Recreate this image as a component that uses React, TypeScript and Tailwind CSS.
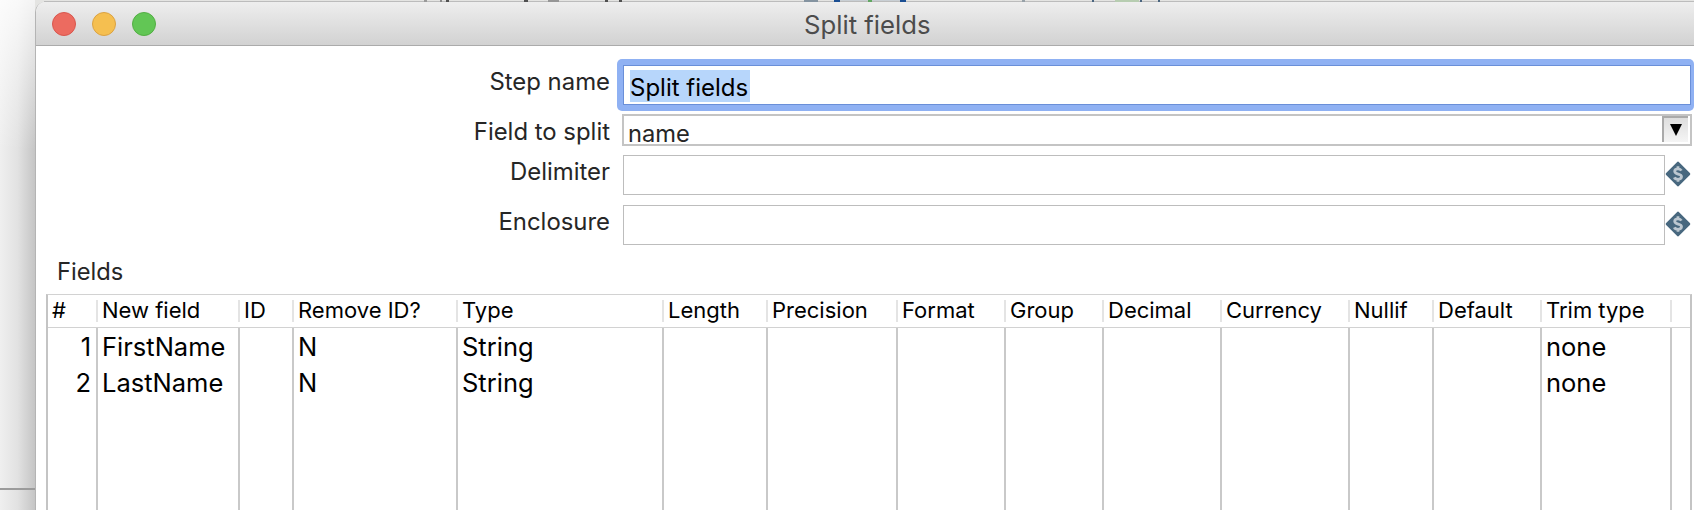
import { ReactNode } from "react";

const columns = [
  { title: "#", box: "w-[50px]" },
  { title: "New field", box: "w-[142px]" },
  { title: "ID", box: "w-[54px]" },
  { title: "Remove ID?", box: "w-[164px]" },
  { title: "Type", box: "w-[206px]" },
  { title: "Length", box: "w-[104px]" },
  { title: "Precision", box: "w-[130px]" },
  { title: "Format", box: "w-[108px]" },
  { title: "Group", box: "w-[98px]" },
  { title: "Decimal", box: "w-[118px]" },
  { title: "Currency", box: "w-[128px]" },
  { title: "Nullif", box: "w-[84px]" },
  { title: "Default", box: "w-[108px]" },
  { title: "Trim type", box: "w-[130px]" },
];

const rows: Record<string, string>[] = [
  { "#": "1", "New field": "FirstName", "Remove ID?": "N", Type: "String", "Trim type": "none" },
  { "#": "2", "New field": "LastName", "Remove ID?": "N", Type: "String", "Trim type": "none" },
];

function Label({ children }: { children: ReactNode }) {
  return (
    <div className="w-[574px] shrink-0 text-right text-[23.9px] leading-[30px] whitespace-nowrap text-[#262626]">
      {children}
    </div>
  );
}

function VariableIcon() {
  return (
    <svg width="26" height="26" viewBox="0 0 26 26" className="mt-[6px] block shrink-0">
      <path d="M13 2.200 23.800 13 13 23.800 2.200 13Z" fill="#48687f" stroke="#48687f" strokeWidth="3" strokeLinejoin="round" />
      <path d="M16.4 9.6C15.700 8.300 14.600 7.800 13 7.800c-2 0-3.300.9-3.300 2.500 0 3.600 6.800 1.900 6.800 5.300 0 1.700-1.500 2.700-3.500 2.700-1.700 0-3.100-.6-3.700-1.900M13 5.300v2.500M13 18.300v2.400" fill="none" stroke="#bcc7d0" strokeWidth="2.800" />
    </svg>
  );
}

/* Sliver of the canvas that shows above the dialog's title bar. */
function CanvasSliver() {
  return (
    <svg width="1659" height="2" viewBox="35 0 1659 2" className="block shrink-0">
      <rect x="35" width="1659" height="2" fill="#e4e4e2" />
      <rect x="44" y="1" width="1650" height="1" fill="#bcbcbc" />
      <g fill="#505050">
        <rect x="424" width="3" height="2" fill="#999" />
        <rect x="440" width="2" height="2" fill="#888" />
        <rect x="446" width="3" height="2" />
        <rect x="524" width="4" height="2" />
        <rect x="548" width="11" height="2" fill="#969696" />
        <rect x="605" width="3" height="2" />
        <rect x="619" width="3" height="2" />
      </g>
      <rect x="804" width="14" height="2" fill="#8493a0" />
      <rect x="840" width="60" height="1" fill="#c9cfd4" />
      <rect x="834" width="6" height="2" fill="#1b4f93" />
      <rect x="868" width="4" height="2" fill="#62a862" />
      <rect x="900" width="6" height="2" fill="#1b4f93" />
      <rect x="1022" width="3" height="2" fill="#97a1a8" />
      <rect x="1092" width="2" height="2" fill="#4a6580" />
      <rect x="1115" width="24" height="2" fill="#b7cdb1" />
      <rect x="1140" width="2" height="2" fill="#4a6580" />
      <rect x="1158" width="2" height="2" fill="#4a6580" />
    </svg>
  );
}

export default function App() {
  return (
    <div className="flex h-[510px] w-[1694px] overflow-hidden bg-white font-[Inter,sans-serif] text-black">
      <div className="flex w-[35px] shrink-0 flex-col bg-linear-to-r from-[#efefef] via-[#e2e2e2] to-[#c5c5c5]">
        <div className="h-[150px] bg-linear-to-b from-white/80 to-white/0" />
        <div className="mt-[338px] h-[2px] bg-[#9b9b9b]" />
      </div>
      <div className="flex w-[1659px] shrink-0 flex-col bg-[#e4e4e2]">
        <CanvasSliver />
        <div className="flex h-[508px] flex-col overflow-hidden rounded-tl-[10px] border-l border-[#b4b4b4] bg-white">
          <div className="flex h-[44px] items-center border-b border-[#ababab] bg-linear-to-b from-[#eeeeee] to-[#d2d2d2] pt-[2px]">
            <div className="ml-4 flex w-[752px] gap-4">
              <span className="size-6 rounded-full border border-[#d8574e] bg-[#ec6b60]" />
              <span className="size-6 rounded-full border border-[#daa243] bg-[#f5bf50]" />
              <span className="size-6 rounded-full border border-[#53ae44] bg-[#62c655]" />
            </div>
            <span className="pt-[2px] text-[25.7px] leading-[30px] text-[#4c4c4c]">Split fields</span>
          </div>

          <div className="flex h-[68px] pt-[13px]">
            <div className="pt-[8px]"><Label>Step name</Label></div>
            <div className="ml-[7px] h-[52px] w-[1077px] shrink-0 rounded-[5px] bg-[#8fb1f3] py-[6px] pr-[3px] pl-[6px]">
              <div className="flex h-[40px] border border-[#6a8fd8] bg-white pt-[4px] pl-[6px]">
                <span className="h-8 w-[120px] bg-[#b7d6fb] text-[24px] leading-[35px] whitespace-nowrap">Split fields</span>
              </div>
            </div>
          </div>

          <div className="flex h-[41px]">
            <div className="pt-[3px]"><Label>Field to split</Label></div>
            <div className="ml-3 flex h-8 w-[1070px] shrink-0 border-2 border-[#c4c4c4] bg-white">
              <span className="h-7 w-[1038px] pl-1 text-[23.7px] leading-[35px] text-[#262626]">name</span>
              <span className="flex h-[26px] w-[26px] items-center justify-center border-t-2 border-l-2 border-[#aaa] bg-linear-to-b from-[#dedede] to-[#f5f5f5]">
                <svg width="12" height="12" viewBox="0 0 12 12"><path d="M0 0H12L6 12Z" fill="#000" /></svg>
              </span>
            </div>
          </div>

          <div className="flex h-[50px]">
            <div className="pt-[2px]"><Label>Delimiter</Label></div>
            <div className="ml-[13px] h-10 w-[1042px] shrink-0 border border-[#bdbdbd] bg-white" />
            <VariableIcon />
          </div>

          <div className="flex h-[48px]">
            <div className="pt-[2px]"><Label>Enclosure</Label></div>
            <div className="ml-[13px] h-10 w-[1042px] shrink-0 border border-[#bdbdbd] bg-white" />
            <VariableIcon />
          </div>

          <div className="h-[42px] pt-[4px] pl-[21px] text-[23.7px] leading-[30px] text-[#262626]">Fields</div>

          <div className="ml-[10px] flex h-[216px] w-[1646px] border-x-2 border-t border-x-[#c4c4c4] border-t-[#d2d2d2]">
            {columns.map((c) => (
              <div key={c.title} className={`flex shrink-0 flex-col ${c.box}`}>
                <div className="flex h-[33px] items-center justify-between border-b border-[#d2d2d2]">
                  <span className="h-8 pl-1 text-[22px] leading-[30px] whitespace-nowrap">{c.title}</span>
                  <span className="h-[22px] w-[2px] bg-[#e4e4e4]" />
                </div>
                <div className="flex-1 border-r-2 border-[#c9c9c9]">
                  {rows.map((r) => (
                    <div key={r["#"]} className={c.title === "#" ? "h-9 pr-[5px] text-right text-[25.5px] leading-[38px]" : "h-9 pl-1 text-[25.5px] leading-[38px]"}>
                      {r[c.title]}
                    </div>
                  ))}
                </div>
              </div>
            ))}
            <div className="h-[33px] flex-1 border-b border-[#d2d2d2]" />
          </div>
        </div>
      </div>
    </div>
  );
}
